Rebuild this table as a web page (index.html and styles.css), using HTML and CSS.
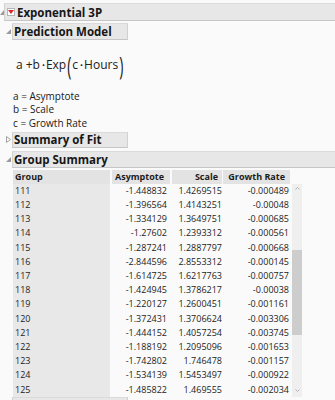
FILE: index.html
```html
<!DOCTYPE html>
<html>
<head>
<meta charset="utf-8">
<link rel="stylesheet" href="styles.css">
</head>
<body>
<div class="report">
  <div class="ohead top">
    <span class="tri"><svg width="4" height="5" viewBox="0 0 4 5"><polygon points="4,0 4,5 0,5" fill="#9a9a9a"/></svg></span>
    <div class="obox wide">
      <span class="menu"><svg width="6" height="4" viewBox="0 0 6 4"><polygon points="0,0 6,0 3,4" fill="#d9282c"/></svg></span>
      <span class="otitle">Exponential 3P</span>
    </div>
  </div>

  <div class="ohead sub pm">
    <span class="tri"><svg width="5" height="5" viewBox="0 0 5 5"><polygon points="5,0 5,5 0,5" fill="#9a9a9a"/></svg></span>
    <div class="obox short"><span class="otitle">Prediction Model</span></div>
  </div>

  <div class="formula">
    <span class="v">a</span><span class="op">+</span><span class="v">b</span><span class="dot">•</span><span class="fn">Exp</span><span class="paren">(</span><span class="v">c</span><span class="dot">•</span><span class="fn">Hours</span><span class="paren">)</span>
  </div>

  <div class="legend">
    <div>a = Asymptote</div>
    <div>b = Scale</div>
    <div>c = Growth Rate</div>
  </div>

  <div class="ohead sub sof">
    <span class="tri"><svg width="5" height="7" viewBox="0 0 5 7"><polygon points="0.5,0.5 4.5,3.5 0.5,6.5" fill="none" stroke="#a0a0a0" stroke-width="1"/></svg></span>
    <div class="obox short"><span class="otitle">Summary of Fit</span></div>
  </div>

  <div class="ohead sub gs">
    <span class="tri"><svg width="5" height="5" viewBox="0 0 5 5"><polygon points="5,0 5,5 0,5" fill="#9a9a9a"/></svg></span>
    <div class="obox wide"><span class="otitle">Group Summary</span></div>
  </div>

  <div class="tbl">
    <div class="th c1">Group</div>
    <div class="th c2">Asymptote</div>
    <div class="th c3">Scale</div>
    <div class="th c4">Growth Rate</div>

    <div class="td c1">111</div><div class="td c2">-1.448832</div><div class="td c3">1.4269515</div><div class="td c4">-0.000489</div>
    <div class="td c1">112</div><div class="td c2">-1.396564</div><div class="td c3">1.4143251</div><div class="td c4">-0.00048</div>
    <div class="td c1">113</div><div class="td c2">-1.334129</div><div class="td c3">1.3649751</div><div class="td c4">-0.000685</div>
    <div class="td c1">114</div><div class="td c2">-1.27602</div><div class="td c3">1.2393312</div><div class="td c4">-0.000561</div>
    <div class="td c1">115</div><div class="td c2">-1.287241</div><div class="td c3">1.2887797</div><div class="td c4">-0.000668</div>
    <div class="td c1">116</div><div class="td c2">-2.844596</div><div class="td c3">2.8553312</div><div class="td c4">-0.000145</div>
    <div class="td c1">117</div><div class="td c2">-1.614725</div><div class="td c3">1.6217763</div><div class="td c4">-0.000757</div>
    <div class="td c1">118</div><div class="td c2">-1.424945</div><div class="td c3">1.3786217</div><div class="td c4">-0.00038</div>
    <div class="td c1">119</div><div class="td c2">-1.220127</div><div class="td c3">1.2600451</div><div class="td c4">-0.001161</div>
    <div class="td c1">120</div><div class="td c2">-1.372431</div><div class="td c3">1.3706624</div><div class="td c4">-0.003306</div>
    <div class="td c1">121</div><div class="td c2">-1.444152</div><div class="td c3">1.4057254</div><div class="td c4">-0.003745</div>
    <div class="td c1">122</div><div class="td c2">-1.188192</div><div class="td c3">1.2095096</div><div class="td c4">-0.001653</div>
    <div class="td c1">123</div><div class="td c2">-1.742802</div><div class="td c3">1.746478</div><div class="td c4">-0.001157</div>
    <div class="td c1">124</div><div class="td c2">-1.534139</div><div class="td c3">1.5453497</div><div class="td c4">-0.000922</div>
    <div class="td c1">125</div><div class="td c2">-1.485822</div><div class="td c3">1.469555</div><div class="td c4">-0.002034</div>

    <div class="scrollbar">
      <svg class="arrow" width="5" height="3" viewBox="0 0 5 3"><polyline points="0.5,2.5 2.5,0.5 4.5,2.5" fill="none" stroke="#b4b4b4" stroke-width="1"/></svg>
      <div class="thumb"></div>
      <div class="spacer"></div>
      <svg class="arrow" width="5" height="3" viewBox="0 0 5 3"><polyline points="0.5,0.5 2.5,2.5 4.5,0.5" fill="none" stroke="#b4b4b4" stroke-width="1"/></svg>
    </div>
  </div>

  <div class="ohead sub next">
    <span class="tri"></span>
    <div class="obox short"></div>
  </div>
</div>
</body>
</html>
```

FILE: styles.css
```css
html, body {
  margin: 0;
  padding: 0;
}
body {
  background: #fafafa;
  font-family: "Open Sans", "Noto Sans", sans-serif;
  color: #1c1c1c;
  width: 335px;
  height: 400px;
  overflow: hidden;
}
.report {
  display: flex;
  flex-direction: column;
}
.ohead {
  display: flex;
  align-items: center;
}
.ohead .tri {
  display: flex;
  align-items: center;
  justify-content: flex-end;
}
.ohead.top {
  margin-top: 3px;
}
.ohead.top .tri {
  width: 4px;
}
.ohead.sub {
  padding-left: 5px;
}
.ohead.sub .tri {
  width: 6px;
  padding-right: 1px;
  justify-content: center;
}
.obox {
  display: flex;
  align-items: center;
  box-sizing: border-box;
  background: #e7e7e7;
  border: 1px solid #d0d0d0;
  border-top-color: #dadada;
  border-bottom-color: #c6c6c6;
  height: 17px;
}
.obox.wide {
  flex: 1;
  margin-right: -2px;
}
.obox.short {
  width: 116px;
}
.top .obox {
  height: 18px;
}
.otitle {
  font-weight: 700;
  font-size: 11.5px;
  padding-left: 1px;
  line-height: 15px;
  color: #161616;
}
.menu {
  display: flex;
  align-items: center;
  justify-content: center;
  box-sizing: border-box;
  width: 8px;
  height: 8px;
  margin-left: 2px;
  margin-right: 1px;
  background: #fff;
  border: 1px solid #b5b5b5;
}
.pm {
  margin-top: 2px;
}
.formula {
  display: flex;
  align-items: center;
  height: 26px;
  margin-top: 11px;
  padding-left: 16px;
  font-size: 12px;
  color: #202020;
}
.formula .op {
  margin: 0 0 0 3px;
}
.formula .dot {
  font-size: 8px;
  margin: 1px 1px 0 2px;
}
.formula .paren {
  display: inline-block;
  font-size: 14px;
  transform: scale(1, 1.85);
  margin: 0 1px 0 1px;
}
.formula .paren:last-child {
  margin: 0 0 0 1px;
}
.legend {
  margin-top: 13px;
  padding-left: 13px;
  font-size: 10px;
  line-height: 13.3px;
  color: #202020;
}
.sof {
  margin-top: 2px;
}
.sof .obox {
  height: 16px;
}
.gs {
  margin-top: 3px;
}
.tbl {
  display: grid;
  grid-template-columns: 99px 60px 51px 67px 2px 10px;
  grid-auto-rows: 14.2px;
  grid-template-rows: 14px;
  margin-top: 2px;
  margin-left: 13px;
  font-size: 9px;
  color: #1c1c1c;
}
.th, .td {
  box-sizing: border-box;
  white-space: nowrap;
  overflow: hidden;
}
.th {
  font-weight: 700;
  background: #e3e3e3;
  background-clip: padding-box;
  line-height: 14px;
}
.td {
  line-height: 14.2px;
}
.c1 {
  grid-column: 1;
  border-right: 2px solid transparent;
  padding-left: 2px;
}
.td.c1 {
  background: #e8e8e8;
  background-clip: padding-box;
}
.c2 {
  grid-column: 2;
  text-align: right;
  border-right: 2px solid transparent;
}
.c3 {
  grid-column: 3;
  text-align: right;
  border-right: 1px solid transparent;
}
.c4 {
  grid-column: 4;
  text-align: right;
}
.th.c2 { padding-right: 6px; }
.th.c3 { padding-right: 4px; }
.th.c4 { padding-right: 5px; }
.td.c2 { padding-right: 3px; }
.td.c3 { padding-right: 0; }
.td.c4 { padding-right: 1px; }
.scrollbar {
  grid-column: 6;
  grid-row: 2 / span 15;
  display: flex;
  flex-direction: column;
  align-items: center;
  background: #efefef;
  padding-top: 3px;
  padding-bottom: 5px;
}
.scrollbar .thumb {
  align-self: stretch;
  height: 85px;
  margin-top: 60px;
  background: #cdcdcd;
}
.scrollbar .spacer {
  flex: 1;
}
.next .obox {
  height: 17px;
}
```
